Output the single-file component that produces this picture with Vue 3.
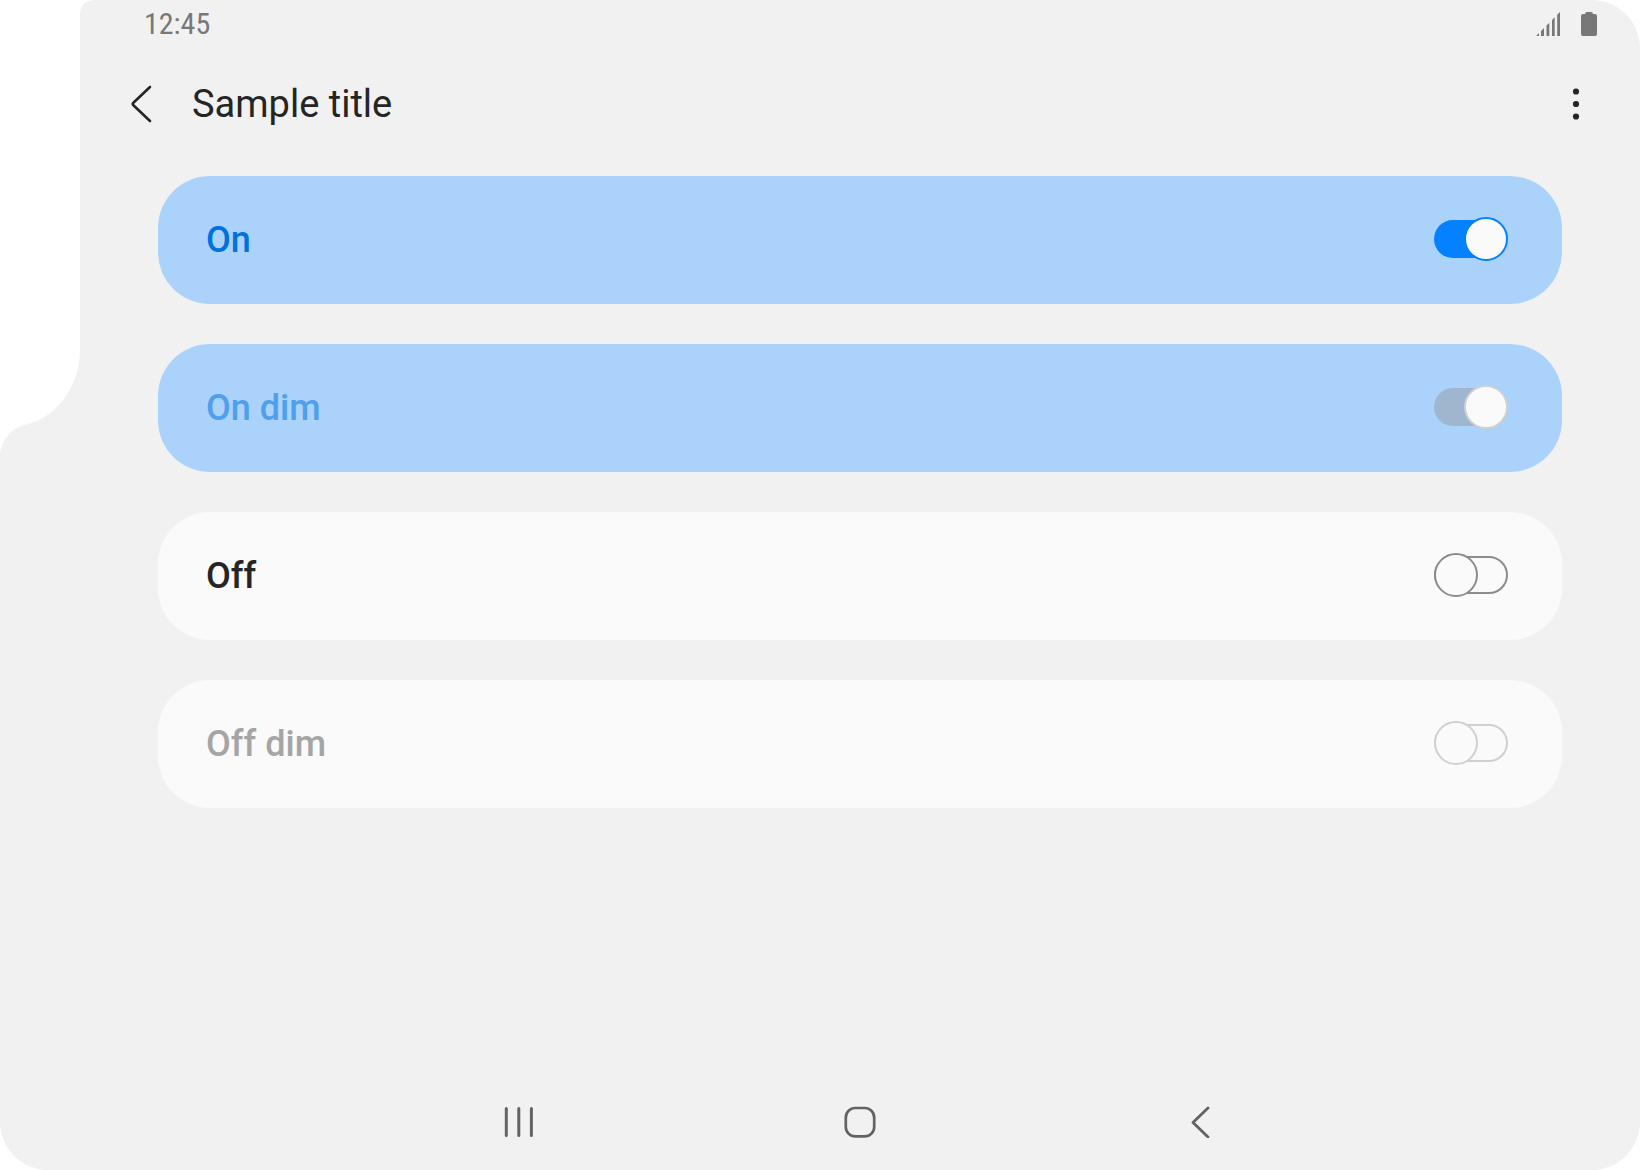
<script setup>
import { reactive } from 'vue'

const rows = reactive([
  { id: 'on', label: 'On', checked: true, disabled: false },
  { id: 'on-dim', label: 'On dim', checked: true, disabled: true },
  { id: 'off', label: 'Off', checked: false, disabled: false },
  { id: 'off-dim', label: 'Off dim', checked: false, disabled: true },
])
</script>

<template>
  <div class="screen">
    <svg class="notch" width="96" height="456" viewBox="0 0 96 456" aria-hidden="true">
      <path d="M0 0H95Q80 0 80 15V350C80 387 56 417 28 424C12 427 2 438 0 454Z" fill="#fff" />
    </svg>

    <div class="status">
      <span class="clock">12:45</span>
      <div class="indicators">
        <svg width="24" height="24" viewBox="0 0 24 24" fill="#787878" aria-hidden="true">
          <path d="M0 24L3 21V24ZM5 24V19L8 16V24ZM10.500 24V13.500L13.300 10.700V24ZM16 24V8L18.700 5.300V24ZM21.200 24V2.800L24 0V24Z" />
        </svg>
        <svg width="16" height="24" viewBox="0 0 16 24" fill="#787878" aria-hidden="true">
          <path d="M4 2Q4 0 6 0H10Q12 0 12 2H14Q16 2 16 4V22Q16 24 14 24H2Q0 24 0 22V4Q0 2 2 2Z" />
        </svg>
      </div>
    </div>

    <header class="appbar">
      <button class="icon-button" type="button" aria-label="Navigate up">
        <svg width="24" height="40" viewBox="0 0 24 40" aria-hidden="true">
          <path d="M20 3L3.400 18.700Q2 20 3.400 21.300L20 37" fill="none" stroke="#252525" stroke-width="2.600" stroke-linecap="round" />
        </svg>
      </button>
      <h1 class="title">Sample title</h1>
      <button class="icon-button" type="button" aria-label="More options">
        <svg width="8" height="32" viewBox="0 0 8 32" fill="#252525" aria-hidden="true">
          <circle cx="4" cy="3.500" r="3.100" />
          <circle cx="4" cy="16" r="3.100" />
          <circle cx="4" cy="28.500" r="3.100" />
        </svg>
      </button>
    </header>

    <main class="list">
      <label
        v-for="row in rows"
        :key="row.id"
        class="card"
        :class="{ on: row.checked, dim: row.disabled }"
        :for="row.id"
      >
        <span class="label">{{ row.label }}</span>
        <input
          :id="row.id"
          v-model="row.checked"
          class="switch"
          type="checkbox"
          role="switch"
          :disabled="row.disabled"
        />
      </label>
    </main>

    <nav class="navbar">
      <button class="icon-button" type="button" aria-label="Recents">
        <svg width="32" height="32" viewBox="0 0 32 32" fill="none" stroke="#636363" stroke-width="3" stroke-linecap="round" aria-hidden="true">
          <path d="M3.300 2.500V29.500M15.800 2.500V29.500M28.400 2.500V29.500" />
        </svg>
      </button>
      <button class="icon-button" type="button" aria-label="Home">
        <svg width="32" height="32" viewBox="0 0 32 32" fill="none" stroke="#636363" stroke-width="2.700" aria-hidden="true">
          <rect x="1.800" y="2" width="28.400" height="28.400" rx="9.500" />
        </svg>
      </button>
      <button class="icon-button" type="button" aria-label="Back">
        <svg width="32" height="32" viewBox="0 0 32 32" fill="none" stroke="#636363" stroke-width="2.800" stroke-linecap="round" stroke-linejoin="round" aria-hidden="true">
          <path d="M23 2L8 16.500L23 31" />
        </svg>
      </button>
    </nav>
  </div>
</template>

<style>
body {
  background: #fff;
}
</style>

<style scoped>
.screen {
  position: relative;
  box-sizing: border-box;
  min-height: 100vh;
  padding-left: 80px;
  display: flex;
  flex-direction: column;
  overflow: hidden;
  background: #f1f1f1;
  border-radius: 0 48px 48px 48px;
  font-family: Roboto, "Liberation Sans", sans-serif;
  color: #252525;
}

.notch {
  position: absolute;
  top: 0;
  left: 0;
}

.status {
  display: flex;
  align-items: center;
  justify-content: space-between;
  height: 48px;
  padding: 0 43px 0 64px;
}

.clock {
  font-family: "Roboto Condensed", Roboto, sans-serif;
  font-size: 30px;
  line-height: 48px;
  color: #787878;
}

.indicators {
  display: flex;
  gap: 21px;
}

.appbar {
  display: flex;
  align-items: center;
  height: 80px;
  padding: 16px 40px 32px 38px;
}

.icon-button {
  display: flex;
  align-items: center;
  justify-content: center;
  width: 48px;
  height: 48px;
  padding: 0;
  border: 0;
  background: none;
}

.title {
  flex: 1;
  margin: 0;
  padding-left: 26px;
  font-size: 38px;
  font-weight: 400;
  line-height: 48px;
}

.list {
  flex: 1;
  display: flex;
  flex-direction: column;
  gap: 40px;
  padding: 0 78px;
}

.card {
  display: flex;
  align-items: center;
  justify-content: space-between;
  height: 128px;
  padding: 0 54px 0 48px;
  box-sizing: border-box;
  border-radius: 52px;
  background: #fafafa;
}

.card.on {
  background: #abd2fb;
}

.label {
  font-size: 36px;
  font-weight: 500;
  line-height: 48px;
}

.on .label {
  color: #0072de;
}

.dim .label {
  color: #a5a5a5;
}

.on.dim .label {
  color: #4e9fec;
}

.switch {
  position: relative;
  appearance: none;
  display: flex;
  align-items: center;
  width: 74px;
  height: 44px;
  margin: 0 0 2px;
  --line: #8c8c8c;
  --track: transparent;
  --knob: #fafafa;
}

.switch::before {
  content: "";
  box-sizing: border-box;
  width: 74px;
  height: 38px;
  border: 2px solid var(--line);
  border-radius: 19px;
  background: var(--track);
}

.switch::after {
  content: "";
  position: absolute;
  left: 0;
  top: 0;
  box-sizing: border-box;
  width: 44px;
  height: 44px;
  border: 2px solid var(--line);
  border-radius: 50%;
  background: var(--knob);
}

.switch:checked::after {
  left: auto;
  right: 0;
}

.switch:disabled {
  --line: #d0d0d0;
}

.switch:checked {
  --line: #0381fe;
  --track: #0381fe;
}

.switch:checked::before {
  width: 60px;
  border: 0;
  border-radius: 19px 0 0 19px;
}

.switch:checked:disabled {
  --line: #d0d0d0;
  --track: #9fb6ce;
}

.navbar {
  display: grid;
  grid-template-columns: repeat(3, 1fr);
  justify-items: center;
  align-self: center;
  width: 66%;
  max-width: 1023px;
  padding-bottom: 24px;
}
</style>
